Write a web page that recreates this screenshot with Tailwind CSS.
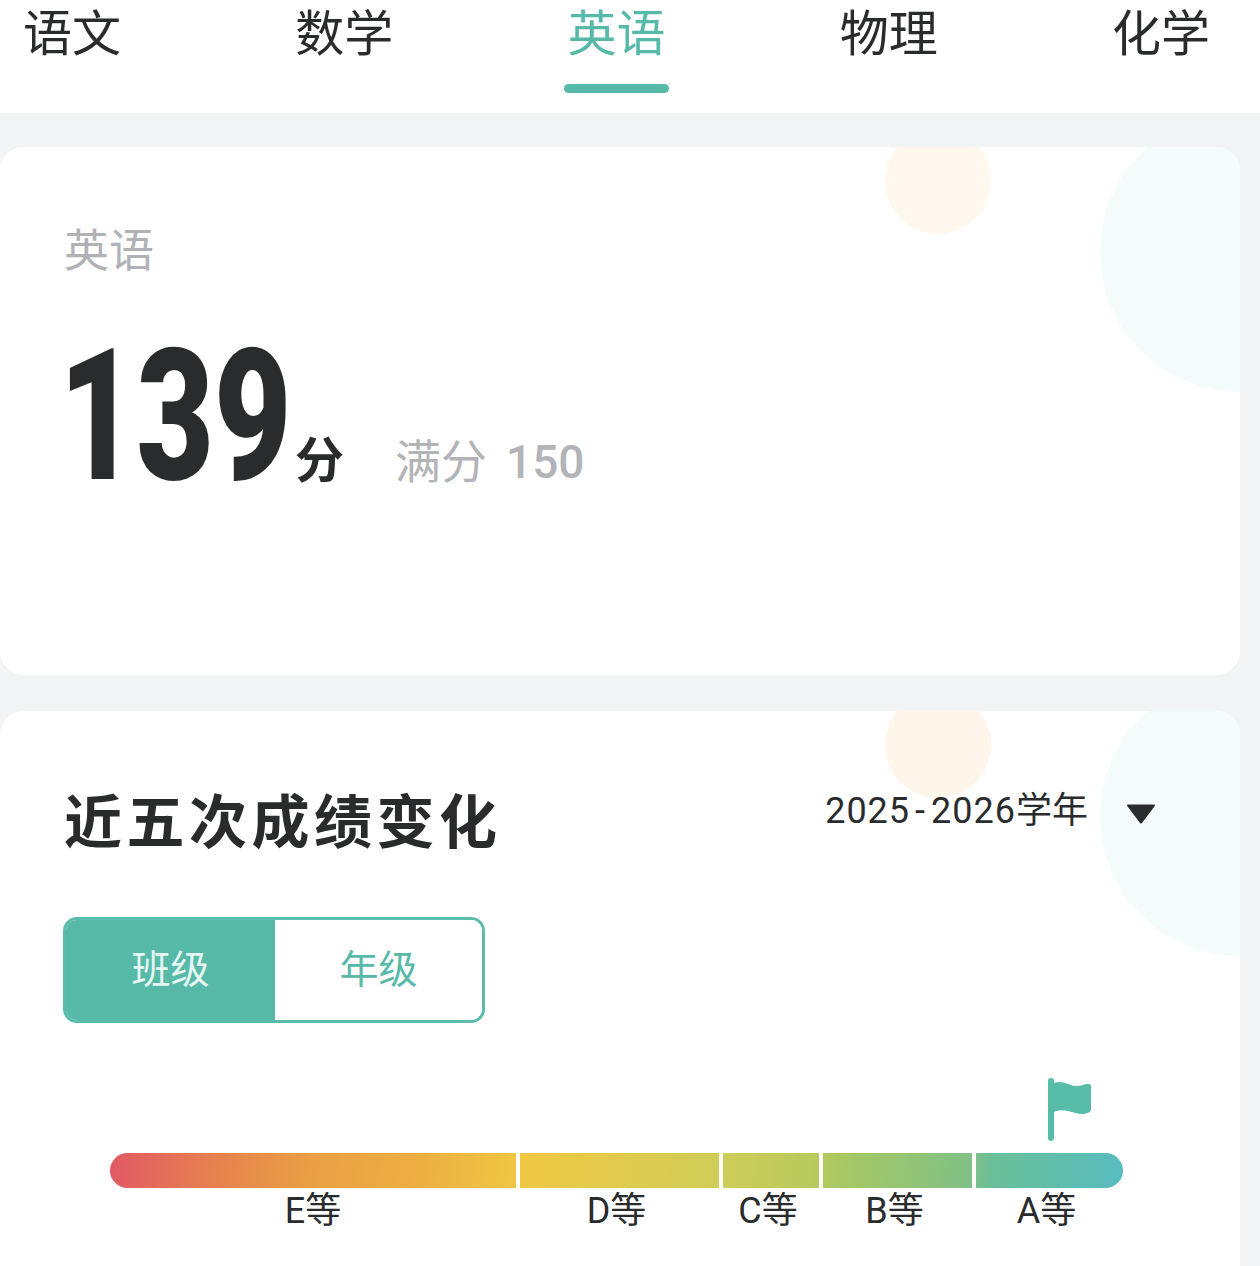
<!doctype html>
<html lang="zh-CN">
<head>
<meta charset="utf-8">
<script src="https://cdn.jsdelivr.net/npm/@tailwindcss/browser@4"></script>
<title>成绩</title>
</head>
<body class="m-0 bg-[#f3f4f6] font-['Roboto','Noto_Sans_CJK_SC',sans-serif] text-[#2a2b2d]">
<div class="w-[1260px] h-[1266px] overflow-hidden flex flex-col">
  <nav class="bg-white h-[113px] shrink-0 flex justify-between pl-[23px] pr-[50px] text-[49px] leading-[66px] pt-[2px]">
    <div class="w-[98px]">语文</div>
    <div class="w-[98px]">数学</div>
    <div class="w-[98px] relative text-[#57b9a8]">英语
      <div class="absolute left-[-4px] top-[82px] w-[105px] h-[9px] rounded-full bg-[#57b9a8]"></div>
    </div>
    <div class="w-[98px]">物理</div>
    <div class="w-[98px]">化学</div>
  </nav>
  <section class="relative overflow-hidden mt-[34px] h-[528px] w-[1240px] shrink-0 bg-white rounded-[24px] pl-[64px] pt-[75px]">
    <div class="absolute left-[885px] top-[-19px] w-[106px] h-[106px] rounded-full bg-[#fef8ee]"></div>
    <div class="absolute left-[1100px] top-[-35px] w-[280px] h-[280px] rounded-full bg-[#f4fcfb]"></div>
    <div class="relative text-[45px] leading-[60px] text-[#b0b2b6]">英语</div>
    <div class="relative flex items-end mt-[58px] h-[152px]">
      <div class="ml-[-5px] w-[236px] h-[152px] font-black text-[184px] leading-[152px] scale-x-[0.727] origin-left whitespace-nowrap">139</div>
      <div class="text-[49px] leading-[60px] font-bold">分</div>
      <div class="ml-[51px] text-[46px] leading-[60px] text-[#b2b4b8] flex gap-[19px]"><span>满分</span><span class="font-medium">150</span></div>
    </div>
  </section>
  <section class="relative overflow-hidden mt-[36px] flex-1 w-[1240px] bg-white rounded-t-[24px] pl-[63px] pt-[77px]">
    <div class="absolute left-[885px] top-[-19px] w-[106px] h-[106px] rounded-full bg-[#fef6ea]"></div>
    <div class="absolute left-[1100px] top-[-35px] w-[280px] h-[280px] rounded-full bg-[#f4fcfb]"></div>
    <div class="relative flex justify-between items-start">
      <h2 class="pl-[1px] font-bold text-[58px] leading-[70px] tracking-[4.5px]">近五次成绩变化</h2>
      <div class="flex items-center mr-[84px] mt-[-2px] text-[36px] leading-[50px]">
        <span class="tracking-[1px]">2025<span class="px-[5px]">-</span>2026</span><span>学年</span>
        <svg class="ml-[38px] mt-[6px]" width="30" height="22" viewBox="0 0 30 22"><path d="M2 1.500h26a1 1 0 0 1 .8 1.600L16 20a1.300 1.300 0 0 1-2 0L1.200 3.100A1 1 0 0 1 2 1.500z" fill="#2a2b2d"/></svg>
      </div>
    </div>
    <div class="relative mt-[59px] w-[422px] h-[106px] flex rounded-[14px] border-[3px] border-[#5bbcab] overflow-hidden text-[39px]">
      <div class="w-[209px] bg-[#57b9a8] text-[#e6f7f3] flex items-center justify-center">班级</div>
      <div class="flex-1 bg-white text-[#57b9a8] flex items-center justify-center">年级</div>
    </div>
    <div class="relative ml-[47px] mt-[54px] w-[1013px]">
      <svg class="block ml-[937px]" width="46" height="64" viewBox="0 0 46 64"><path d="M1 4a3 3 0 0 1 6 0v2c5-2 9-1 14 1s10 3 15 1c2-.7 8-2 8 1v24c0 2-5 4-9 4s-9-2-14-3c-5-1-10-1-14 1v26a3 3 0 0 1-6 0z" fill="#57bda9"/></svg>
      <div class="mt-[12px] flex h-[35px] rounded-full overflow-hidden bg-[linear-gradient(95deg,#e25866_0%,#e5804f_10%,#e9a044_20%,#ecae42_30%,#efc843_41%,#cfcd58_60%,#b6c95e_70%,#a8c862_72%,#80c088_85%,#6abf98_87%,#57bcc0_100%)]">
        <div class="w-[406px]"></div>
        <div class="w-[4px] bg-white"></div>
        <div class="w-[199px]"></div>
        <div class="w-[4px] bg-white"></div>
        <div class="w-[96px]"></div>
        <div class="w-[4px] bg-white"></div>
        <div class="w-[149px]"></div>
        <div class="w-[4px] bg-white"></div>
        <div class="flex-1"></div>
      </div>
      <div class="flex text-[36px] leading-[46px] text-[#2a2b2d]">
        <div class="w-[406px] text-center">E等</div>
        <div class="w-[4px]"></div>
        <div class="w-[193px] text-center">D等</div>
        <div class="w-[4px]"></div>
        <div class="w-[102px] text-center">C等</div>
        <div class="w-[4px]"></div>
        <div class="w-[143px] text-center">B等</div>
        <div class="w-[4px]"></div>
        <div class="w-[153px] text-center">A等</div>
      </div>
    </div>
  </section>
</div>
</body>
</html>
